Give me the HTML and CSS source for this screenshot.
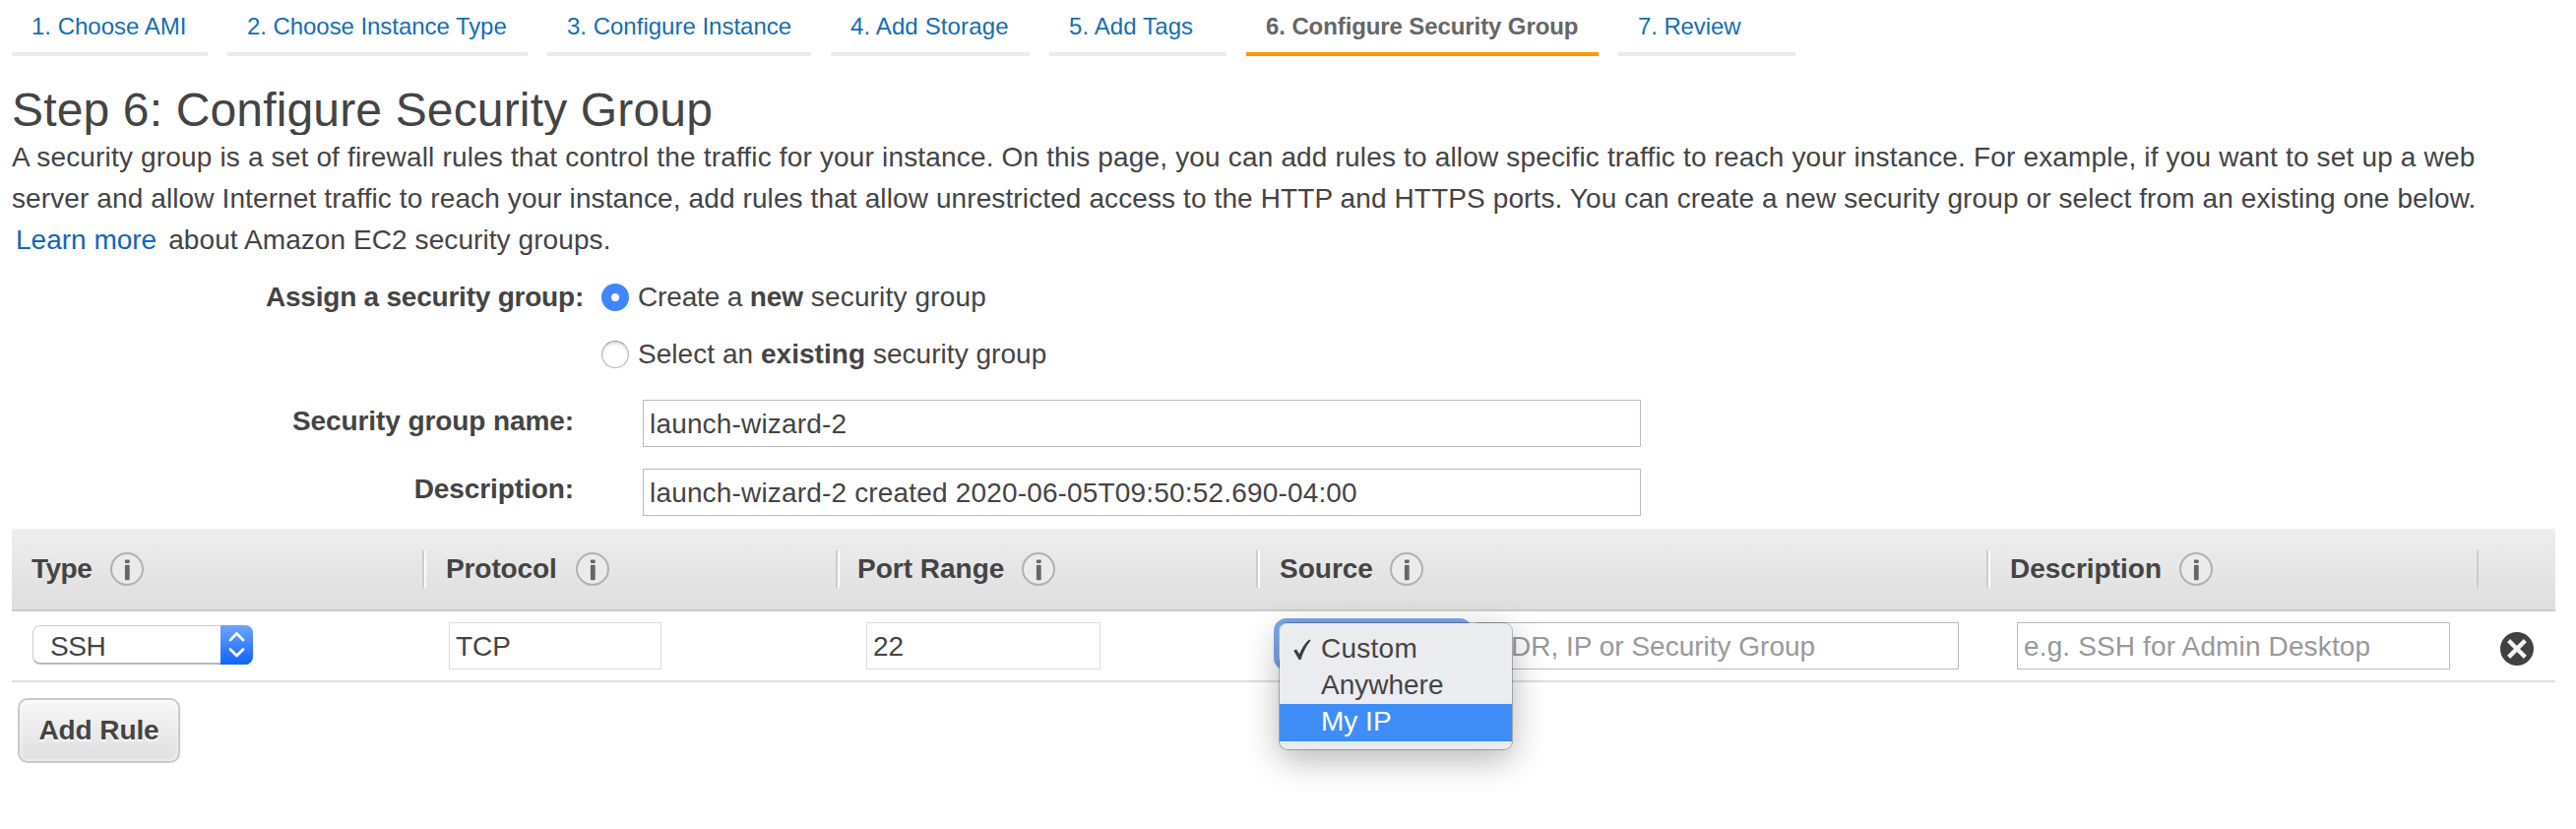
FILE: index.html
```
<!DOCTYPE html>
<html lang="en">
<head>
<meta charset="utf-8">
<title>Step 6: Configure Security Group</title>
<link rel="stylesheet" href="styles.css">
</head>
<body>
<svg class="defs" width="0" height="0">
  <symbol id="info" viewBox="0 0 34 34">
    <circle cx="17" cy="17" r="16" fill="#ebebeb" stroke="#b1b1b1" stroke-width="2"/>
    <rect x="14.9" y="7.5" width="4.8" height="3.6" rx="1" fill="#666"/>
    <rect x="14.9" y="12.8" width="4.8" height="15.4" rx="1" fill="#666"/>
  </symbol>
</svg>
<nav class="tabs">
  <a class="tab tab-ami">1. Choose AMI</a>
  <a class="tab tab-type">2. Choose Instance Type</a>
  <a class="tab tab-instance">3. Configure Instance</a>
  <a class="tab tab-storage">4. Add Storage</a>
  <a class="tab tab-tags">5. Add Tags</a>
  <a class="tab tab-security active">6. Configure Security Group</a>
  <a class="tab tab-review">7. Review</a>
</nav>
<main class="page">
  <h1 class="title">Step 6: Configure Security Group</h1>
  <p class="intro"><span class="line line-one">A security group is a set of firewall rules that control the traffic for your instance. On this page, you can add rules to allow specific traffic to reach your instance. For example, if you want to set up a web</span>
  <span class="line line-two">server and allow Internet traffic to reach your instance, add rules that allow unrestricted access to the HTTP and HTTPS ports. You can create a new security group or select from an existing one below.</span>
  <span class="line"><a class="learn">Learn more</a><span class="about">about Amazon EC2 security groups.</span></span></p>

  <section class="form">
    <div class="choice">
      <span class="label assign">Assign a security group:</span>
      <span class="radio checked"></span>
      <span class="choice-text create">Create a <b>new</b><span class="tail"> security group</span></span>
    </div>
    <div class="choice">
      <span class="label assign"></span>
      <span class="radio"></span>
      <span class="choice-text select">Select an <b>existing</b> security group</span>
    </div>
    <div class="field-row name-row">
      <span class="label">Security group name:</span>
      <div class="field wide">launch-wizard-2</div>
    </div>
    <div class="field-row desc-row">
      <span class="label">Description:</span>
      <div class="field wide">launch-wizard-2 created 2020-06-05T09:50:52.690-04:00</div>
    </div>
  </section>

  <section class="rules">
    <div class="grid head">
      <div class="th"><span class="type-label">Type</span><svg class="info"><use href="#info"/></svg></div>
      <div class="th"><span class="protocol-label">Protocol</span><svg class="info"><use href="#info"/></svg></div>
      <div class="th port-head"><span>Port Range</span><svg class="info"><use href="#info"/></svg></div>
      <div class="th source-head"><span>Source</span><svg class="info"><use href="#info"/></svg></div>
      <div class="th"><span>Description</span><svg class="info"><use href="#info"/></svg></div>
      <div class="th"></div>
    </div>
    <div class="grid row">
      <div class="cell type-cell">
        <div class="dropdown"><span class="value">SSH</span>
          <span class="stepper"><svg width="33" height="40" viewBox="0 0 33 40"><path d="M10 15 16.5 8.5 23 15M10 24.5 16.5 31 23 24.5" fill="none" stroke="#fff" stroke-width="2.8" stroke-linecap="round" stroke-linejoin="round"/></svg></span>
        </div>
      </div>
      <div class="cell protocol-cell"><div class="field quiet">TCP</div></div>
      <div class="cell port-cell"><div class="field quiet">22</div></div>
      <div class="cell source-cell">
        <div class="dropdown focused"></div>
        <div class="field source-field"><span class="placeholder">DR, IP or Security Group</span></div>
        <div class="menu">
          <div class="option"><svg class="check" width="20" height="24" viewBox="0 0 20 24"><path d="M1.2 12.8 4 11.6 7.2 16.2C9.4 10 12.8 5 17 1.4L18.6 2.6C14 8.2 10.8 14.6 8.6 22L6.6 22Z" fill="#3c3d3f"/></svg><span class="custom">Custom</span></div>
          <div class="option"><span>Anywhere</span></div>
          <div class="option chosen"><span>My IP</span></div>
        </div>
      </div>
      <div class="cell desc-cell"><div class="field"><span class="placeholder eg">e.g. SSH for Admin Desktop</span></div></div>
      <div class="cell delete-cell"><svg width="36" height="36" viewBox="0 0 36 36"><circle cx="18" cy="18" r="17" fill="#414141"/><path d="M11.2 11.2 24.8 24.8M24.8 11.2 11.2 24.8" stroke="#f4f4f4" stroke-width="4.4" stroke-linecap="square"/></svg></div>
    </div>
  </section>
  <button class="add">Add Rule</button>
</main>
</body>
</html>
```
FILE: styles.css
```
* { box-sizing: border-box; }

body {
  margin: 0;
  min-height: 842px;
  background: #fff;
  color: #444;
  font-family: "Liberation Sans", Arial, sans-serif;
  font-size: 28px;
  line-height: 42px;
  white-space: nowrap;
}

.defs { display: block; height: 0; }

/* wizard steps */
.tabs { display: flex; gap: 20px; padding-left: 12px; height: 57px; }
.tab {
  height: 57px;
  padding-left: 20px;
  border-bottom: 4px solid #eaeaea;
  color: #146eb4;
  font-size: 24px;
  line-height: 53px;
}
.tab-ami { width: 199px; }
.tab-type { width: 305px; letter-spacing: -0.06px; }
.tab-instance { width: 268px; }
.tab-storage { width: 202px; letter-spacing: 0.13px; }
.tab-tags { width: 180px; letter-spacing: 0.11px; }
.tab-security { width: 358px; letter-spacing: -0.1px; }
.tab-review { width: 180px; letter-spacing: -0.1px; }
.tab.active { border-color: #ff9900; color: #666; font-weight: bold; }

.page { height: 785px; padding: 27px 21px 0 12px; }

.title {
  margin: 0 0 2px;
  height: 53px;
  overflow: hidden;
  font-size: 48px;
  font-weight: normal;
  line-height: 55px;
  letter-spacing: 0.155px;
}
.intro { margin: 0; }
.line { display: block; }
.line-one { letter-spacing: 0.167px; }
.line-two { letter-spacing: 0.11px; }
.learn { margin-left: 4px; color: #1166bb; }
.about { margin-left: 12px; letter-spacing: 0.08px; }

/* group form */
.form { display: flex; flex-direction: column; padding-top: 16px; }
.choice { display: flex; align-items: center; height: 42px; margin-bottom: 16px; }
.label { width: 571px; text-align: right; font-weight: bold; letter-spacing: -0.09px; line-height: 43px; }
.label.assign { width: 581px; line-height: 42px; letter-spacing: -0.22px; }
.radio {
  width: 28px;
  height: 28px;
  margin: 0 9px 0 18px;
  border-radius: 50%;
  border: 1px solid #b4b4b4;
  border-top-color: #999;
  box-shadow: inset 0 2px 3px rgba(0, 0, 0, 0.14);
}
.radio.checked {
  border: 0;
  background: radial-gradient(circle, #fff 0 3.6px, #4086ff 4.6px);
  box-shadow: none;
}
.create { letter-spacing: -0.15px; }
.tail { letter-spacing: 0.17px; }
.select { letter-spacing: 0.04px; }
.field-row { display: flex; align-items: flex-start; height: 48px; }
.name-row { margin-top: 9px; }
.desc-row { margin-top: 22px; }
.desc-row .label { line-height: 41px; }

.field {
  height: 48px;
  border: 1px solid #bbb;
  padding: 1px 0 0 6px;
  background: #fff;
  line-height: 46px;
}
.wide { width: 1014px; margin-left: 70px; letter-spacing: 0.17px; }
.quiet { border-color: #ddd; }
.placeholder { color: #999; }
.eg { letter-spacing: 0.14px; }

/* rules table */
.rules { margin-top: 13px; }
.grid { display: grid; grid-template-columns: 419px 420px 427px 742px 498px 1fr; }
.head {
  height: 84px;
  border-bottom: 2px solid #ccc;
  background: linear-gradient(#eee, #dedede);
}
.th {
  display: flex;
  align-items: center;
  height: 38px;
  margin-top: 22px;
  padding-left: 22px;
  box-shadow: inset 2px 0 #fff, -2px 0 #ccc;
  font-weight: bold;
}
.th:first-child { padding-left: 20px; box-shadow: none; }
.th:last-child { box-shadow: -2px 0 #ccc; }
.port-head { padding-left: 20px; }
.type-label { letter-spacing: -0.5px; }
.protocol-label { letter-spacing: -0.1px; }
.info { width: 34px; height: 34px; margin: -1px 0 0 18px; }
.type-label + .info, .protocol-label + .info { margin-left: 19px; }
.source-head .info { margin-left: 17px; }

.row { height: 72px; border-bottom: 2px solid #ddd; }
.cell { display: flex; padding-top: 11px; }
.dropdown {
  display: flex;
  width: 224px;
  height: 40px;
  margin-top: 3px;
  border-radius: 8px;
  border: 1px solid #ccc;
  border-bottom: 2px solid #b8b8b8;
  background: #fff;
  line-height: 41px;
}
.value { flex: 1; padding-left: 17px; letter-spacing: -0.4px; }
.stepper {
  width: 33px;
  height: 40px;
  margin: -1px -1px 0 0;
  border-radius: 0 8px 8px 0;
  background: linear-gradient(#6da6ff, #0f62ff);
}
.stepper svg { display: block; }
.type-cell { padding-left: 21px; }
.protocol-cell { padding-left: 25px; }
.protocol-cell .field { width: 216px; }
.port-cell { padding-left: 29px; }
.port-cell .field { width: 238px; }
.source-cell { position: relative; padding-left: 21px; }
.focused { width: 192px; margin-top: 1px; height: 43px; border: 0; box-shadow: 0 0 0 5px #79a8ef; }
.source-field { width: 490px; margin-left: 9px; padding-left: 34px; }
.desc-cell { padding-left: 29px; }
.desc-cell .field { width: 440px; }
.delete-cell { padding: 20px 0 0 21px; }

/* open source list, over the table */
.menu {
  position: absolute;
  z-index: 2;
  left: 22px;
  top: 12px;
  width: 236px;
  height: 128px;
  padding-top: 7px;
  border-radius: 8px;
  background: #ebecef;
  box-shadow: 0 0 0 1px rgba(0, 0, 0, 0.25), 0 10px 34px rgba(0, 0, 0, 0.3);
  line-height: 37px;
}
.option { position: relative; height: 37px; padding-left: 42px; }
.option .custom { letter-spacing: 0.25px; }
.check { position: absolute; left: 13px; top: 8px; }
.chosen { height: 38px; margin-top: 1px; background: #3f8ef7; color: #fff; line-height: 36px; }

.add {
  display: block;
  width: 165px;
  height: 66px;
  margin: 16px 0 0 6px;
  padding: 0;
  border: 2px solid #c9c9c9;
  border-radius: 10px;
  background: linear-gradient(#f7f7f7, #dfdfdf);
  box-shadow: inset 0 0 5px rgba(255, 255, 255, 0.9);
  color: #444;
  font: bold 28px "Liberation Sans", Arial, sans-serif;
  letter-spacing: -0.1px;
  line-height: 62px;
  text-shadow: 0 2px #fff;
}
```
